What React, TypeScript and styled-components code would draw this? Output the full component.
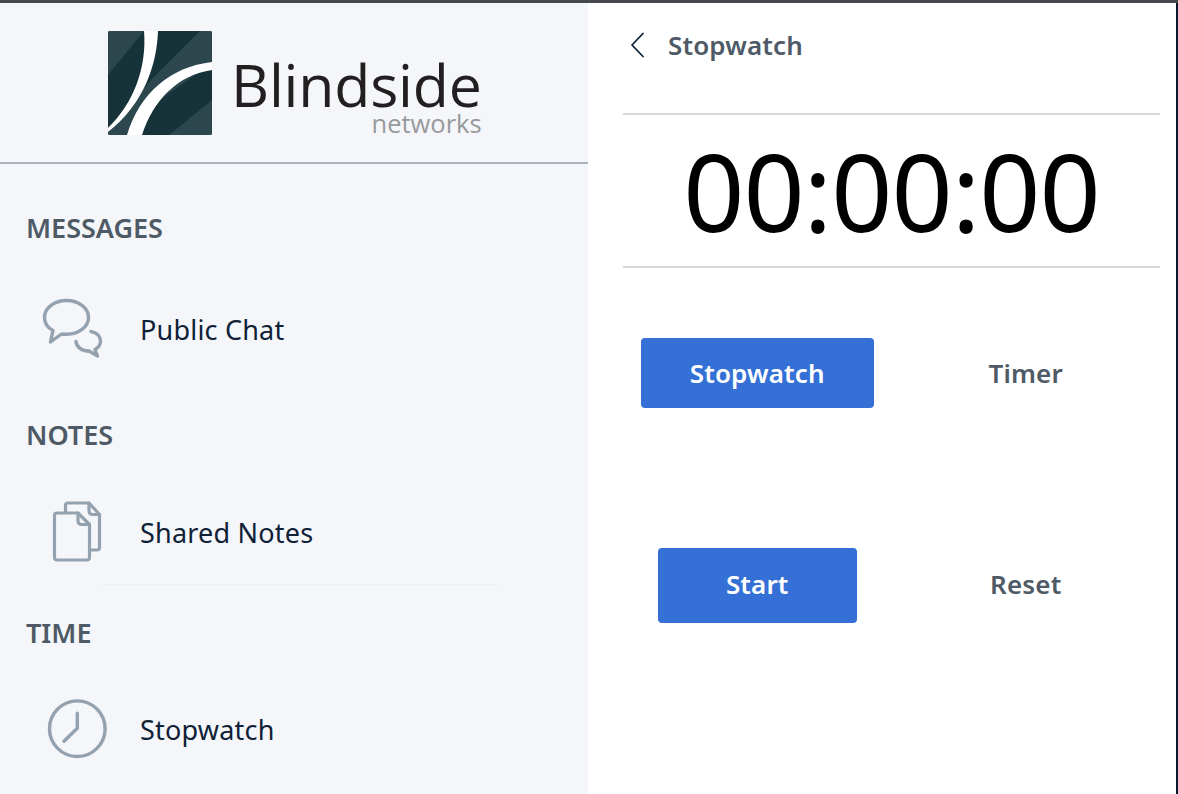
import { ReactNode } from "react";
import styled, { createGlobalStyle } from "styled-components";

const GlobalStyle = createGlobalStyle`
  html, body {
    margin: 0;
    padding: 0;
    background: #ffffff;
    font-family: "Noto Sans", "Open Sans", sans-serif;
  }
  * {
    box-sizing: border-box;
  }
`;

const Page = styled.div`
  width: 1178px;
  height: 794px;
  display: flex;
  flex-direction: column;
  overflow: hidden;
`;

const TopStrip = styled.div`
  height: 3px;
  flex: none;
  background: #45484c;
`;

const Body = styled.div`
  flex: 1;
  display: flex;
  min-height: 0;
`;

const Sidebar = styled.aside`
  width: 588px;
  flex: none;
  background: #f4f6fa;
  display: flex;
  flex-direction: column;
`;

const Brand = styled.header`
  height: 161px;
  flex: none;
  border-bottom: 2px solid #a8b3bd;
  display: flex;
  align-items: flex-start;
  padding: 28px 0 0 108px;
  gap: 19px;
`;

const LogoWords = styled.div`
  display: flex;
  flex-direction: column;
  align-items: flex-end;
  padding-top: 26px;
`;

const LogoName = styled.span`
  font-family: "Open Sans", sans-serif;
  font-size: 59px;
  font-weight: 400;
  line-height: 54px;
  letter-spacing: -0.2px;
  color: #231f20;
`;

const LogoSub = styled.span`
  font-family: "Open Sans", sans-serif;
  font-size: 25.5px;
  line-height: 24px;
  color: #98999b;
`;

const SectionTitle = styled.h2<{ $top: number }>`
  margin: ${(p) => p.$top}px 0 0 26px;
  height: 36px;
  font-size: 27px;
  line-height: 36px;
  font-weight: 600;
  color: #4e5a66;
`;

const NavRow = styled.div<{ $top: number; $rule?: boolean }>`
  margin-top: ${(p) => p.$top}px;
  height: 70px;
  flex: none;
  display: flex;
  align-items: center;
  position: relative;
  ${(p) =>
    p.$rule &&
    `&::after {
      content: "";
      position: absolute;
      left: 100px;
      width: 400px;
      bottom: -18px;
      height: 1px;
      background: #eef0f3;
    }`}
`;

const NavIcon = styled.div`
  width: 140px;
  flex: none;
  height: 70px;
  display: flex;
  align-items: center;
  padding-left: 40px;
`;

const NavLabel = styled.span`
  font-size: 27px;
  letter-spacing: 0.2px;
  color: #0f2136;
`;

const Main = styled.main`
  flex: 1;
  border-right: 2px solid #06172a;
  background: #ffffff;
  display: flex;
  flex-direction: column;
  padding: 0 16px 0 35px;
`;

const PanelHeader = styled.div`
  height: 110px;
  flex: none;
  display: flex;
  align-items: flex-start;
  padding: 22px 0 0 7px;
  gap: 22px;
`;

const BackButton = styled.button`
  border: 0;
  background: none;
  padding: 0;
  width: 16px;
  height: 40px;
  display: flex;
  align-items: center;
`;

const PanelTitle = styled.h1`
  margin: 0;
  font-size: 26px;
  line-height: 40px;
  font-weight: 600;
  letter-spacing: 0.15px;
  color: #4e5a66;
`;

const Clock = styled.div`
  height: 155px;
  flex: none;
  border-top: 2px solid #d5d9dd;
  border-bottom: 2px solid #d5d9dd;
  display: flex;
  align-items: center;
  justify-content: center;
  font-size: 107px;
  line-height: 1;
  letter-spacing: -1px;
  color: #000000;
`;

const ChoiceRow = styled.div<{ $top: number; $height: number }>`
  margin-top: ${(p) => p.$top}px;
  height: ${(p) => p.$height}px;
  flex: none;
  display: grid;
  grid-template-columns: 1fr 1fr;
  align-items: center;
  justify-items: center;
`;

const PrimaryButton = styled.button<{ $width: number; $lift?: number }>`
  width: ${(p) => p.$width}px;
  height: 100%;
  border: 0;
  border-radius: 4px;
  background: #3570d6;
  color: #ffffff;
  font-family: inherit;
  font-size: 26px;
  font-weight: 600;
  letter-spacing: 0.15px;
  padding: 0 0 ${(p) => p.$lift ?? 0}px;
`;

const PlainButton = styled.button<{ $lift?: number }>`
  border: 0;
  background: none;
  padding: 0 0 ${(p) => p.$lift ?? 0}px;
  color: #4e5a66;
  font-family: inherit;
  font-size: 26px;
  font-weight: 600;
  letter-spacing: 0.15px;
`;

const Square = styled.div`
  width: 104px;
  height: 104px;
  flex: none;
`;

const LogoMark = () => (
  <Square>
    <svg width="104" height="104" viewBox="0 0 104 104">
      <defs>
        <clipPath id="logo-clip">
          <rect width="104" height="104" rx="2" />
        </clipPath>
      </defs>
      <g clipPath="url(#logo-clip)">
        <rect width="104" height="104" fill="#17333a" />
        <path d="M0 0H36L0 44Z" fill="#2c474e" />
        <path d="M92 0H104V32L50 70L20 104H0V96L44 48Z" fill="#2c474e" />
        <path d="M104 69V104H61Z" fill="#2c474e" />
        <path d="M36 0H50C49 32 37 72 0 101V97C26 72 39 36 36 0Z" fill="#ffffff" />
        <path d="M104 31V39C70 44 46 68 34 104H19C32 62 62 36 104 31Z" fill="#ffffff" />
      </g>
    </svg>
  </Square>
);

const ChatIcon = () => (
  <svg width="70" height="70" viewBox="0 0 70 70" fill="none" stroke="#94a1ae" strokeWidth="3.4" strokeLinecap="round" strokeLinejoin="round">
    <path d="M13 36.5L10.5 48L21.5 40C23 40.2 25 40.3 26.5 40.3C38.5 40.3 48.5 33 48.5 23.4C48.5 13.8 38.5 6.5 26.5 6.5C14.5 6.5 4.5 13.8 4.5 23.4C4.5 29 7.5 33.5 13 36.5Z" />
    <path d="M51 37.5C57 38.5 60.5 42.5 60.5 47C60.5 50.5 58.5 53.5 55 55.5L57.5 62L49 57C42 57 36.5 53.5 36 47.5" />
  </svg>
);

const NotesIcon = () => (
  <svg width="70" height="70" viewBox="0 0 70 70" fill="none" stroke="#94a1ae" strokeWidth="3.2" strokeLinecap="round" strokeLinejoin="round">
    <path d="M25.5 14V8.5C25.5 7 26.5 6 28 6H49L59.5 17.5V50.5C59.5 52 58.5 53 57 53H50.5" />
    <path d="M49 6V14C49 16 50.5 17.5 52.5 17.5H59.5" />
    <path d="M17 16H38L49.5 27.5V60.5C49.5 62 48.5 63 47 63H17C15.5 63 14.5 62 14.5 60.5V18.5C14.5 17 15.5 16 17 16Z" />
    <path d="M38 16V24C38 26 39.5 27.5 41.5 27.5H49.5" />
  </svg>
);

const ClockIcon = () => (
  <svg width="70" height="70" viewBox="0 0 70 70" fill="none" stroke="#94a1ae" strokeWidth="3.4" strokeLinecap="round" strokeLinejoin="round">
    <circle cx="37.3" cy="34.7" r="27.8" />
    <path d="M37.3 19.3V34.3L24 47.3" />
  </svg>
);

const BackIcon = () => (
  <svg width="16" height="26" viewBox="0 0 16 26" fill="none" stroke="#0f2136" strokeWidth="1.8" strokeLinecap="round" strokeLinejoin="round">
    <path d="M13 1.5L2 13L13 24.5" />
  </svg>
);

type NavItemProps = {
  icon: ReactNode;
  label: string;
  top: number;
  rule?: boolean;
};

const NavItem = ({ icon, label, top, rule }: NavItemProps) => (
  <NavRow $top={top} $rule={rule}>
    <NavIcon>{icon}</NavIcon>
    <NavLabel>{label}</NavLabel>
  </NavRow>
);

const App = () => (
  <Page>
    <GlobalStyle />
    <TopStrip />
    <Body>
      <Sidebar>
        <Brand>
          <LogoMark />
          <LogoWords>
            <LogoName>Blindside</LogoName>
            <LogoSub>networks</LogoSub>
          </LogoWords>
        </Brand>
        <SectionTitle $top={46}>MESSAGES</SectionTitle>
        <NavItem icon={<ChatIcon />} label="Public Chat" top={48} />
        <SectionTitle $top={53}>NOTES</SectionTitle>
        <NavItem icon={<NotesIcon />} label="Shared Notes" top={44} rule />
        <SectionTitle $top={48}>TIME</SectionTitle>
        <NavItem icon={<ClockIcon />} label="Stopwatch" top={43} />
      </Sidebar>
      <Main>
        <PanelHeader>
          <BackButton>
            <BackIcon />
          </BackButton>
          <PanelTitle>Stopwatch</PanelTitle>
        </PanelHeader>
        <Clock>00:00:00</Clock>
        <ChoiceRow $top={70} $height={70}>
          <PrimaryButton $width={233}>Stopwatch</PrimaryButton>
          <PlainButton>Timer</PlainButton>
        </ChoiceRow>
        <ChoiceRow $top={140} $height={75}>
          <PrimaryButton $width={199} $lift={4}>Start</PrimaryButton>
          <PlainButton $lift={4}>Reset</PlainButton>
        </ChoiceRow>
      </Main>
    </Body>
  </Page>
);

export default App;
